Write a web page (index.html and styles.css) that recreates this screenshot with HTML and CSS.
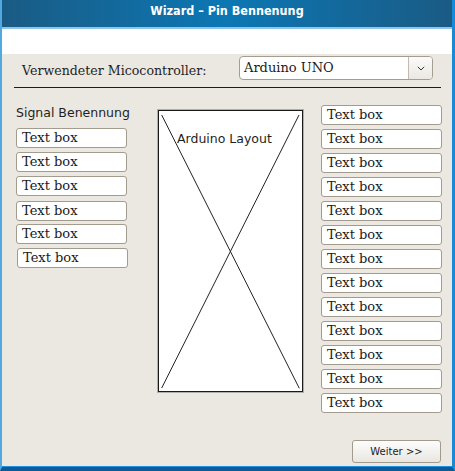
FILE: index.html
```html
<!DOCTYPE html>
<html lang="de">
<head>
<meta charset="utf-8">
<title>Wizard – Pin Bennenung</title>
<link rel="stylesheet" href="styles.css">
</head>
<body>
<div class="window">
  <div class="titlebar">Wizard – Pin Bennenung</div>
  <div class="banner"></div>
  <div class="content">
    <div class="ctrl-row">
      <span class="ctrl-label">Verwendeter Micocontroller:</span>
      <div class="combo">
        <span class="combo-value">Arduino UNO</span>
        <span class="combo-btn"><svg width="8" height="5" viewBox="0 0 8 5"><path d="M0.8 0.8 L4 4 L7.2 0.8" fill="none" stroke="#333" stroke-width="1"/></svg></span>
      </div>
    </div>
    <div class="rule"></div>
    <div class="main">
      <div class="col-left">
        <div class="col-title">Signal Benennung</div>
        <div class="fields">
          <div class="field">Text box</div>
          <div class="field">Text box</div>
          <div class="field">Text box</div>
          <div class="field">Text box</div>
          <div class="field">Text box</div>
          <div class="field">Text box</div>
        </div>
      </div>
      <div class="layout-box">
        <svg class="layout-x" viewBox="0 0 143 280" preserveAspectRatio="none"><path d="M2.7 4 L140.3 277.3 M140 4 L2.7 277" fill="none" stroke="#222" stroke-width="1"/></svg>
        <span class="layout-label">Arduino Layout</span>
      </div>
      <div class="col-right">
        <div class="field">Text box</div>
        <div class="field">Text box</div>
        <div class="field">Text box</div>
        <div class="field">Text box</div>
        <div class="field">Text box</div>
        <div class="field">Text box</div>
        <div class="field">Text box</div>
        <div class="field">Text box</div>
        <div class="field">Text box</div>
        <div class="field">Text box</div>
        <div class="field">Text box</div>
        <div class="field">Text box</div>
        <div class="field">Text box</div>
      </div>
    </div>
    <div class="footer"><button class="btn">Weiter &gt;&gt;</button></div>
  </div>
</div>
</body>
</html>
```
FILE: styles.css
```css
* { box-sizing: border-box; }
html, body { margin: 0; padding: 0; }
body {
  width: 455px;
  height: 471px;
  overflow: hidden;
  font-family: "DejaVu Sans", sans-serif;
  color: #1e1e1e;
}
.window {
  width: 455px;
  height: 471px;
  display: flex;
  flex-direction: column;
  border-left: 2px solid #52a9df;
  border-right: 3px solid #1b8ad6;
  border-bottom: 4px solid #0c5b98;
  background: #ebe8e2;
}
.titlebar {
  height: 29px;
  border-bottom: 2px solid #8ec5e8;
  background: linear-gradient(90deg, #1a5b84 0%, #0c77b4 50%, #1a5b84 100%);
  color: #fff;
  text-align: center;
  font-family: "DejaVu Sans Condensed", "DejaVu Sans", sans-serif;
  font-stretch: condensed;
  font-weight: bold;
  font-size: 12.5px;
  line-height: 20px;
  padding-top: 1px;
}
.banner { height: 25px; background: #fff; }
.content {
  flex: 1;
  display: flex;
  flex-direction: column;
  box-shadow: inset 0 -1px 0 #1f90dd;
}
.ctrl-row {
  display: flex;
  align-items: flex-start;
  height: 26px;
  padding: 2px 19px 0 20px;
}
.ctrl-label {
  font-family: "DejaVu Serif", serif;
  font-size: 12.6px;
  line-height: 16px;
  margin-top: 7px;
}
.combo {
  margin-left: auto;
  width: 194px;
  height: 24px;
  display: flex;
  border: 1px solid #a59d8f;
  border-radius: 4px;
  background: #fff;
}
.combo-value {
  flex: 1;
  font-family: "DejaVu Serif", serif;
  font-size: 13px;
  line-height: 20px;
  padding: 1px 0 1px 4px;
  color: #1a1a1a;
}
.combo-btn {
  width: 24px;
  border-left: 1px solid #c2bbb0;
  border-radius: 0 3px 3px 0;
  background: linear-gradient(#fbfaf9, #ebe8e3);
  display: flex;
  align-items: center;
  justify-content: center;
}
.rule {
  margin: 7px 11px 0 12px;
  height: 1px;
  background: #1c1c1c;
}
.main {
  display: flex;
  align-items: flex-start;
  margin-top: 17px;
  padding-left: 14px;
}
.col-left { width: 114px; }
.col-title {
  font-size: 12.5px;
  line-height: 15px;
}
.fields {
  margin-top: 8px;
  display: flex;
  flex-direction: column;
  gap: 4px;
}
.field {
  width: 111px;
  height: 20px;
  border: 1px solid #a39b8d;
  border-radius: 3px;
  background: #fff;
  font-family: "DejaVu Serif", serif;
  font-size: 13px;
  line-height: 16px;
  padding: 1px 0 1px 5px;
  color: #1a1a1a;
  white-space: nowrap;
}
.fields .field:nth-child(4) { margin-top: 1px; }
.fields .field:nth-child(5) { margin-top: -1px; }
.fields .field:nth-child(6) { margin-left: 1px; }
.layout-box {
  position: relative;
  margin: 5px 0 0 28px;
  width: 145px;
  height: 282px;
  border: 1px solid #1a1a1a;
  box-shadow: 0 0 0 1px rgba(0, 0, 0, 0.25);
  background: #fff;
  padding: 17px 0 0 18px;
}
.layout-x {
  position: absolute;
  left: 0;
  top: 0;
  width: 100%;
  height: 100%;
}
.layout-label {
  position: relative;
  font-size: 12.5px;
  line-height: 15px;
}
.col-right {
  margin-left: 18px;
  display: flex;
  flex-direction: column;
  gap: 4px;
}
.col-right .field { width: 121px; }
.footer {
  margin-top: auto;
  display: flex;
  justify-content: flex-end;
  padding: 0 11px 4px 0;
}
.btn {
  width: 89px;
  height: 23px;
  border: 1px solid #a29a8c;
  border-radius: 3px;
  background: linear-gradient(#fdfdfc, #e9e6e1);
  font-family: "DejaVu Sans", sans-serif;
  font-size: 10px;
  color: #222;
  padding: 0;
}
```
